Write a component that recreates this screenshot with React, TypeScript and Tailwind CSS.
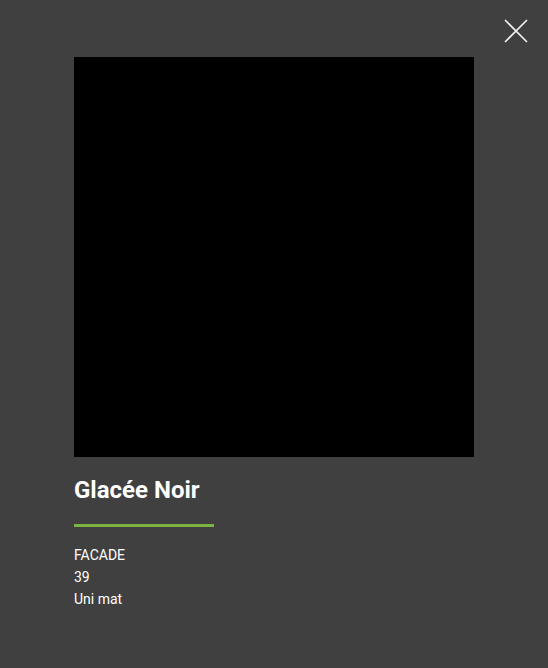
export default function App() {
  return (
    <div className="relative min-h-[668px] w-full bg-[#404040] font-['Roboto',sans-serif] text-white">
      <button className="absolute right-[20px] top-[19px] h-[24px] w-[24px]" aria-label="Close">
        <svg viewBox="0 0 24 24" className="h-[24px] w-[24px]" fill="none" stroke="#f2f2f2" strokeWidth="1.6">
          <path d="M1 1L23 23M23 1L1 23" />
        </svg>
      </button>
      <div className="flex flex-col pl-[74px] pt-[57px]">
        <div className="h-[400px] w-[400px] bg-black" />
        <h1 className="mt-[19px] text-[24px] font-bold leading-[28px]">Glacée Noir</h1>
        <div className="mt-[20px] h-[3px] w-[140px] bg-[#7cb342]" />
        <div className="mt-[17px] flex flex-col text-[14px] leading-[22px]">
          <span>FACADE</span>
          <span>39</span>
          <span>Uni mat</span>
        </div>
      </div>
    </div>
  );
}
